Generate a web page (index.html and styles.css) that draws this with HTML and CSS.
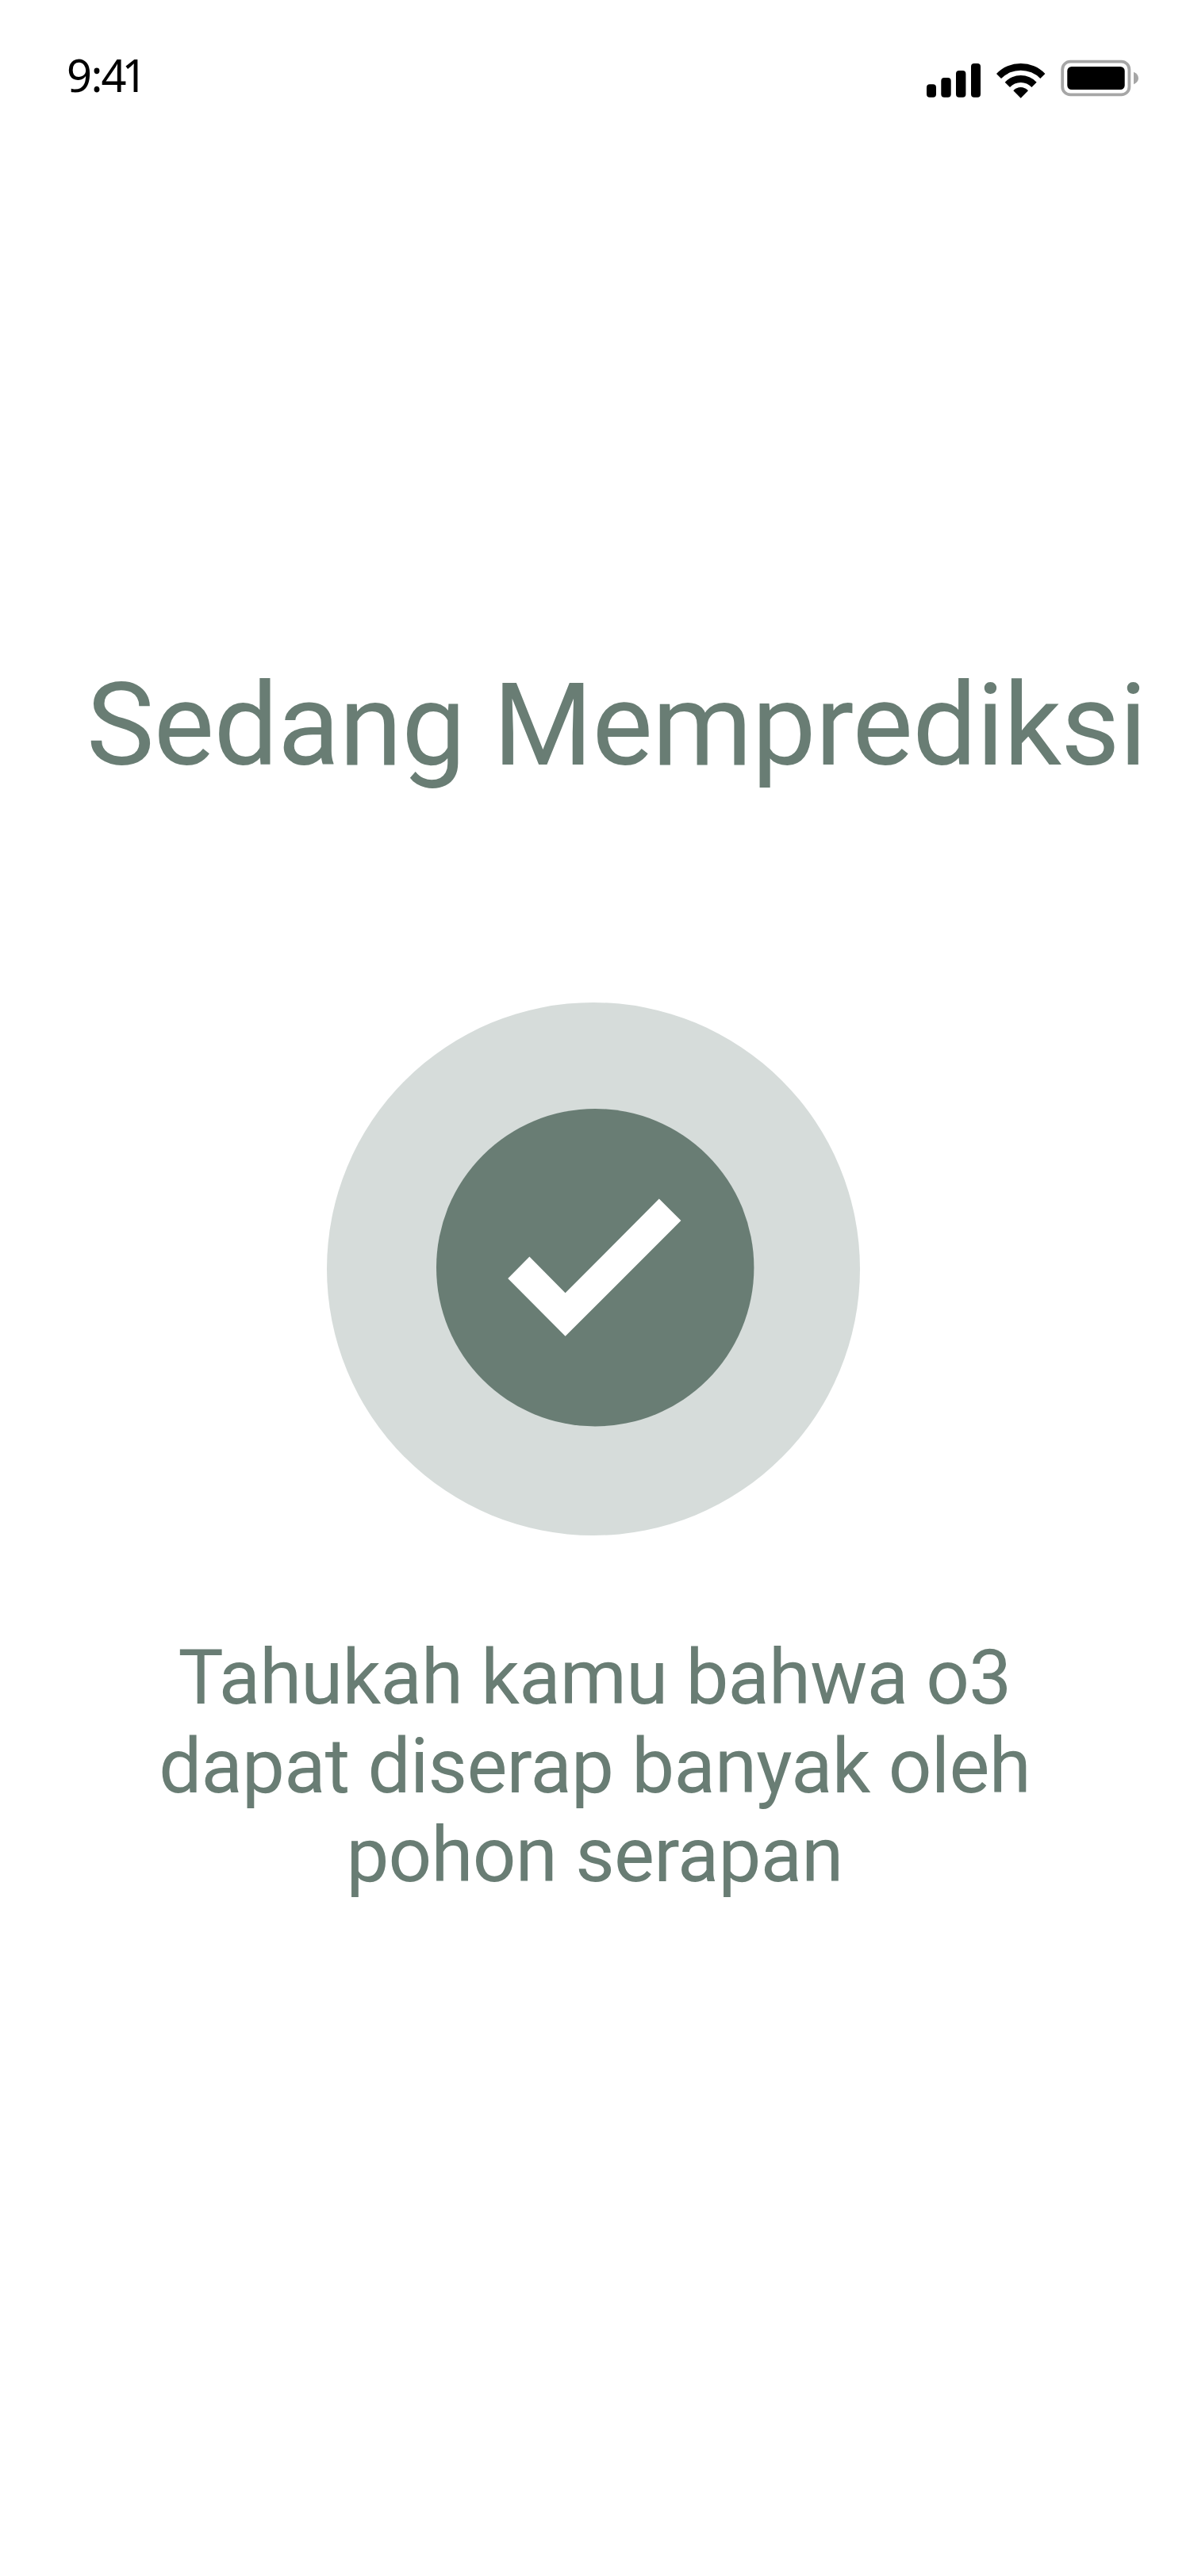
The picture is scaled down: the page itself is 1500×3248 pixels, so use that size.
FILE: index.html
```html
<!DOCTYPE html>
<html lang="id">
<head>
<meta charset="utf-8">
<title>Sedang Memprediksi</title>
<link rel="stylesheet" href="styles.css">
</head>
<body>
<header class="status-bar">
  <time class="clock"><span class="hour">9</span><span class="colon">:</span><span class="tens">4</span>1</time>
  <svg class="indicators" viewBox="0 0 280 60" aria-hidden="true">
    <rect x="8" y="36.3" width="12" height="16.4" rx="4"/>
    <rect x="26.3" y="28" width="12.4" height="24.7" rx="4"/>
    <rect x="45" y="19" width="12.4" height="33.7" rx="4"/>
    <rect x="64" y="10" width="12" height="42.7" rx="4"/>
    <path d="M96 23A42.7 42.7 0 0 1 157.4 23L151.3 29A34.5 34.5 0 0 0 102 29Z"/>
    <path d="M106.7 33.7A27.3 27.3 0 0 1 146.7 33.7L140.4 40A18.6 18.6 0 0 0 113 40Z"/>
    <path d="M117.3 44.3A12.4 12.4 0 0 1 136 44.3L126.7 53.7Z"/>
    <rect class="battery-case" x="179.2" y="7.6" width="84.2" height="41.8" rx="10"/>
    <rect x="185.3" y="14" width="72.4" height="29" rx="5.5"/>
    <path class="battery-tip" d="M269 20.7Q275 23.5 275 28.5Q275 33.5 269 36.3Z"/>
  </svg>
</header>
<main class="content">
  <h1 class="title">Sedang Memprediksi</h1>
  <svg class="success" viewBox="0 0 672 672" role="img" aria-label="Berhasil">
    <circle class="halo" cx="336" cy="336" r="336"/>
    <circle class="disc" cx="338.2" cy="334.2" r="200.2"/>
    <path class="check" d="M228.2 348L255.4 320.6L300.6 366.2L418.8 247.6L446.4 275L300.6 420.8Z"/>
  </svg>
  <p class="fact">Tahukah kamu bahwa o3<br>dapat diserap banyak oleh<br>pohon serapan</p>
</main>
</body>
</html>
```
FILE: styles.css
```css
body {
  margin: 0;
  min-height: 3248px;
  background: #fff;
  color: #697d74;
  font-family: Roboto, sans-serif;
}

.status-bar {
  display: flex;
  justify-content: space-between;
  height: 120px;
  padding: 66px 60px 0 84px;
  box-sizing: border-box;
  color: #000;
}

.clock {
  font: 56px/56px "Noto Sans", sans-serif;
}

.hour { letter-spacing: -1.5px; }
.colon { letter-spacing: -2px; }
.tens { letter-spacing: -6px; }

.indicators {
  width: 280px;
  height: 60px;
  margin-top: 4px;
}

.battery-case {
  fill: none;
  stroke: #a6a6a6;
  stroke-width: 3.8;
}

.battery-tip { fill: #a6a6a6; }

.content {
  display: flex;
  flex-direction: column;
  align-items: center;
  letter-spacing: -0.72px;
}

.title {
  align-self: flex-start;
  margin: 710px 0 0 109px;
  font-size: 144px;
  line-height: 170px;
  font-weight: 400;
  white-space: nowrap;
}

.success {
  width: 672px;
  height: 672px;
  margin: 264px 4px 0 0;
}

.halo { fill: #d6dcda; }
.disc { fill: #697d74; }
.check { fill: #fff; }

.fact {
  margin: 123px 1px 0 0;
  font-size: 96px;
  line-height: 112px;
  text-align: center;
}
```
